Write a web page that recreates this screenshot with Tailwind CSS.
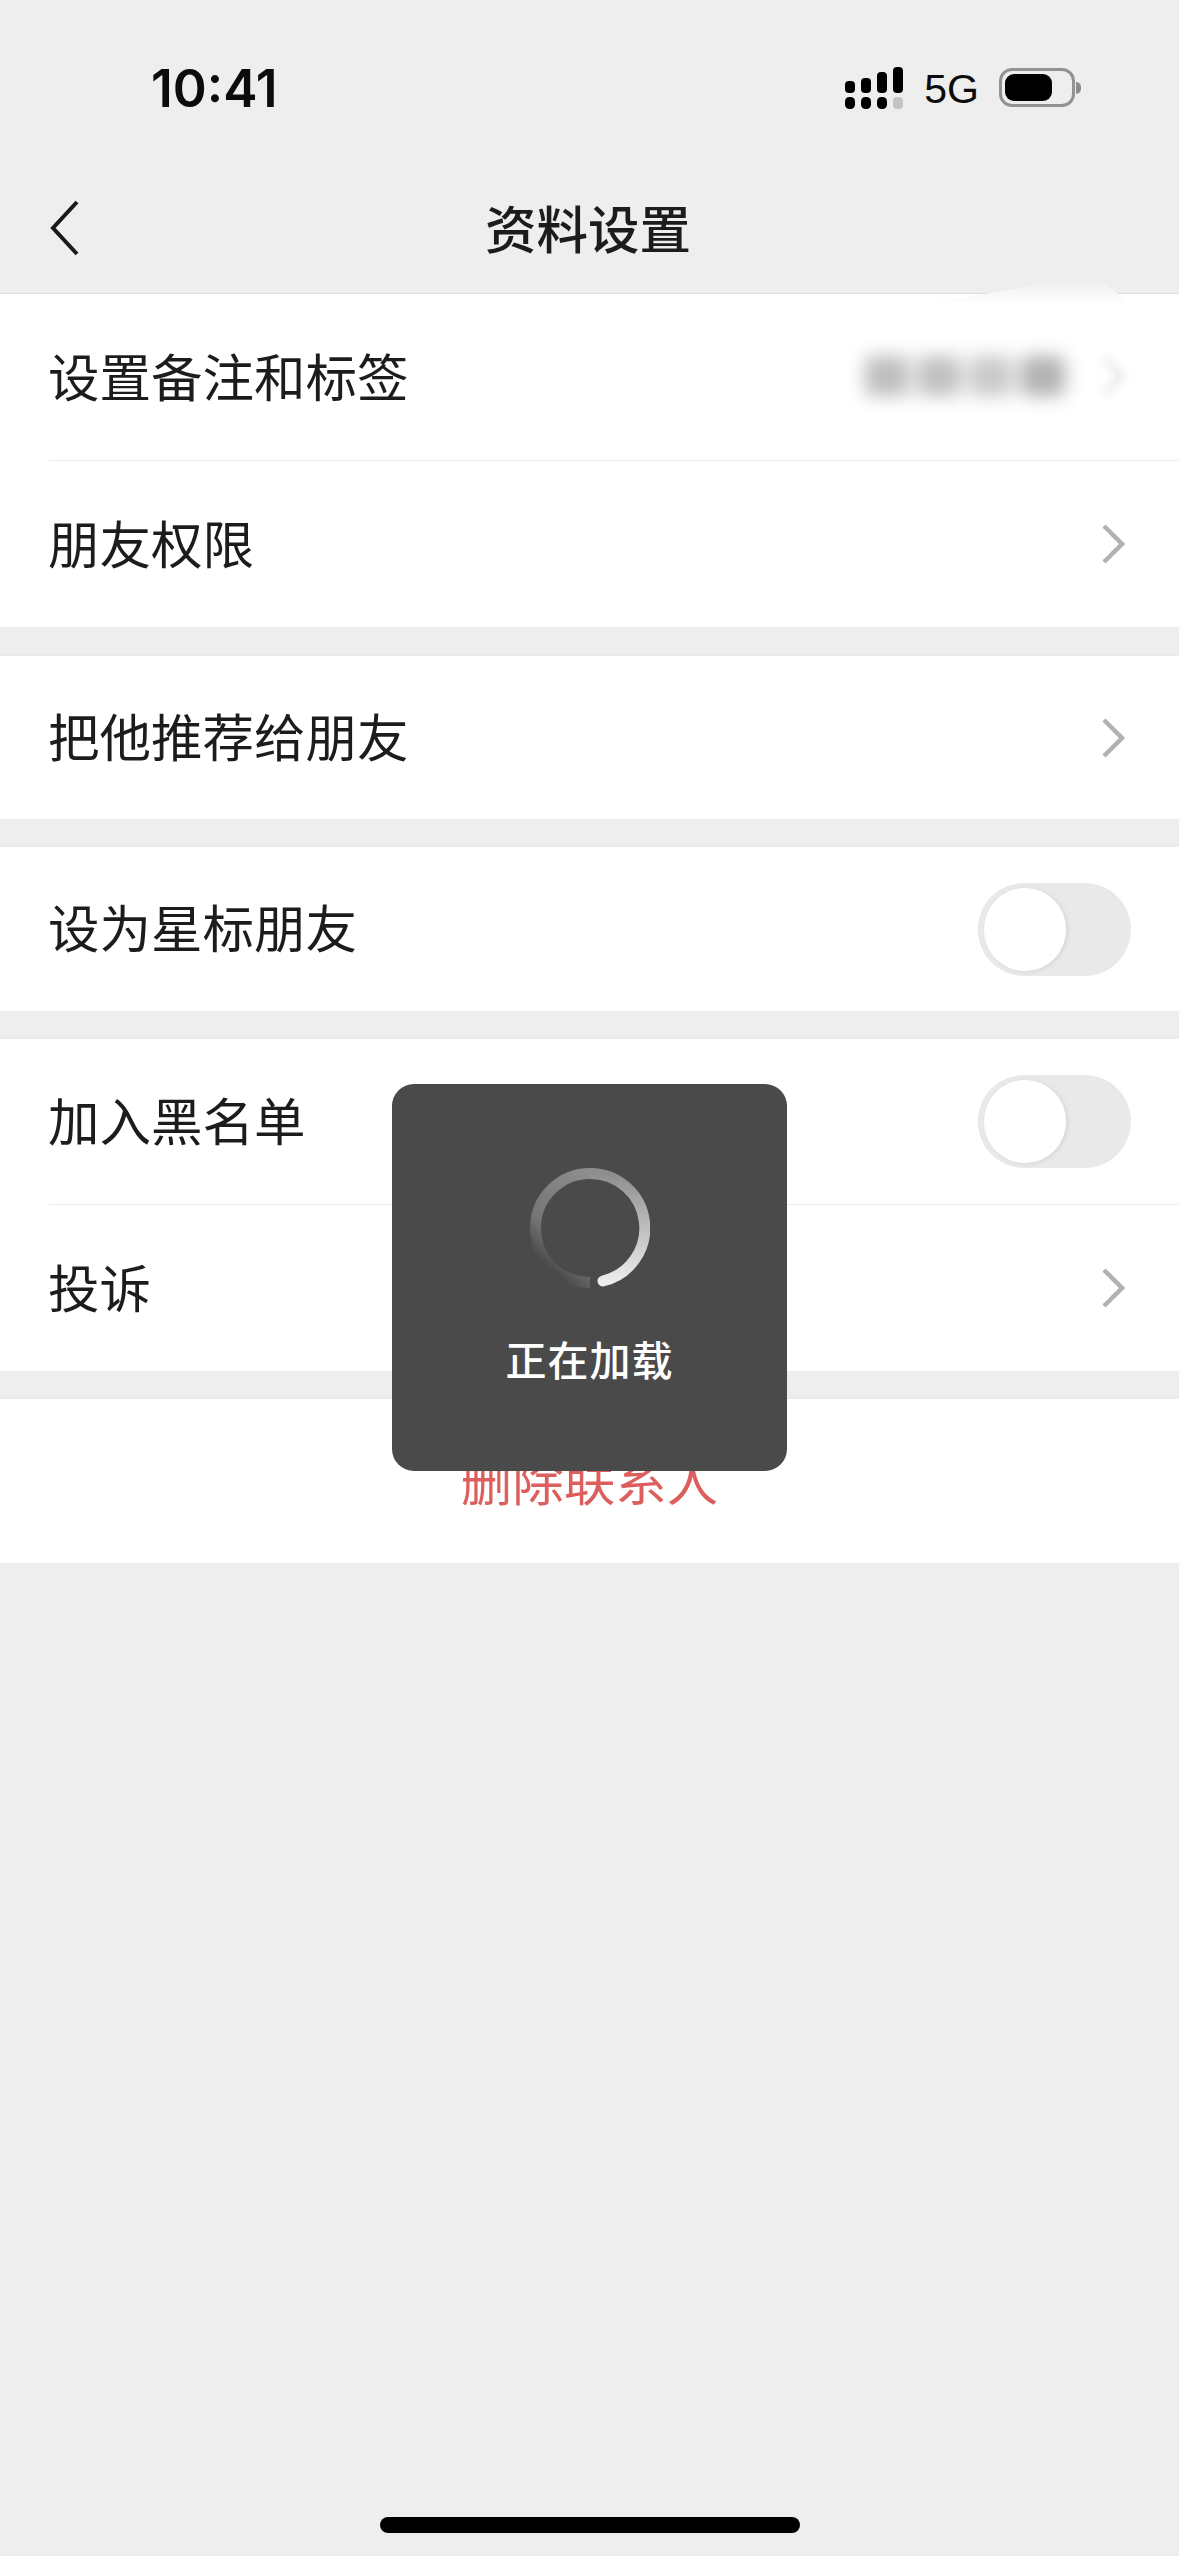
<!DOCTYPE html>
<html lang="zh-CN">
<head>
<meta charset="utf-8">
<script src="https://cdn.jsdelivr.net/npm/@tailwindcss/browser@4"></script>
</head>
<body class="m-0">
<div class="relative w-[1179px] h-[2556px] overflow-hidden flex flex-col bg-[#eeeeee] text-[#1c1c1c] font-['Noto_Sans_CJK_SC','Noto_Sans_CJK_SC',sans-serif]">
  <!-- status bar -->
  <div class="h-[176px] shrink-0 pt-[54px] pl-[151px] pr-[98px] flex items-start justify-between">
    <span class="text-[51.5px] leading-[68px] font-semibold font-['Inter',sans-serif] text-[#0c0c0c]">10:41</span>
    <div class="flex items-start">
      <svg class="mt-[13px]" width="60" height="44" viewBox="0 0 60 44" fill="#000">
        <rect x="1" y="14" width="10" height="12" rx="4"/><rect x="17" y="11" width="10" height="15" rx="4"/><rect x="33" y="5" width="10" height="21" rx="4"/><rect x="49" y="0" width="10" height="26" rx="4"/>
        <rect x="1" y="30" width="10" height="12" rx="4.5"/><rect x="17" y="30" width="10" height="12" rx="4.5"/><rect x="33" y="30" width="10" height="12" rx="4.5"/><rect x="49" y="30" width="10" height="12" rx="4" fill="#c4c4c4"/>
      </svg>
      <span class="ml-[20px] mt-[12px] text-[41px] leading-[46px] font-['Liberation_Sans',sans-serif] text-[#0c0c0c]">5G</span>
      <div class="ml-[20px] mt-[14px] flex items-center">
        <div class="w-[76px] h-[39px] rounded-[13px] border-[3px] border-[#929292] p-[3px]">
          <div class="w-[47px] h-full rounded-[9px] bg-black"></div>
        </div>
        <div class="ml-[1px] w-[5px] h-[12px] rounded-r-full bg-[#8c8c8c]"></div>
      </div>
    </div>
  </div>
  <!-- nav -->
  <div class="relative h-[118px] shrink-0 flex items-center justify-center border-b border-[#dcdcdc]">
    <svg class="absolute left-[46px] top-[24px]" width="36" height="56" viewBox="0 0 36 56" fill="none" stroke="#1a1a1a" stroke-width="4"><path d="M31 2 L7 28 L31 54"/></svg>
    <span class="text-[51.5px] leading-[70px] font-medium -mt-[16px] -ml-[3px]">资料设置</span>
    <svg class="absolute left-[920px] bottom-[-12px]" width="210" height="24" viewBox="0 0 210 24">
      <defs><linearGradient id="s" x1="0" y1="0" x2="0" y2="1"><stop offset="0" stop-color="#f1f1f1"/><stop offset="1" stop-color="#ffffff"/></linearGradient></defs>
      <path d="M0 24 L70 12 L120 3 L185 3 L205 18 L210 24 Z" fill="url(#s)"/>
    </svg>
  </div>
  <!-- group 1 -->
  <div class="bg-white shrink-0 border-b border-[#e9e9e9]">
    <div class="h-[167px] ml-[49px] flex items-center border-b border-[#ececec]">
      <span class="text-[51.5px] leading-[70px] font-normal -ml-[1px] -mt-[4px]">设置备注和标签</span>
      <div class="ml-auto mr-[54px] flex items-center gap-[36px]">
        <div class="flex gap-[8px] blur-[9px] opacity-45 -mt-[2px]">
          <div class="w-[44px] h-[40px] rounded-md bg-[#6f6f6f]"></div><div class="w-[44px] h-[40px] rounded-md bg-[#777777]"></div><div class="w-[44px] h-[40px] rounded-md bg-[#8a8a8a]"></div><div class="w-[44px] h-[40px] rounded-md bg-[#555555]"></div>
        </div>
        <svg class="blur-[5px] opacity-40 -mt-[2px]" width="24" height="42" viewBox="0 0 24 42" fill="none" stroke="#a8a8a8" stroke-width="4"><path d="M3 3 L21 21 L3 39"/></svg>
      </div>
    </div>
    <div class="h-[166px] pl-[49px] flex items-center">
      <span class="text-[51.5px] leading-[70px] font-normal -mt-[4px] -ml-[1px]">朋友权限</span>
      <svg class="ml-auto mr-[54px]" width="24" height="42" viewBox="0 0 24 42" fill="none" stroke="#b2b2b2" stroke-width="4.5"><path d="M3 3 L21 21 L3 39"/></svg>
    </div>
  </div>
  <!-- group 2 -->
  <div class="mt-[27px] h-[165px] shrink-0 bg-white border-y border-[#e9e9e9] pl-[49px] flex items-center">
    <span class="text-[51.5px] leading-[70px] font-normal -mt-[6px] -ml-[1px]">把他推荐给朋友</span>
    <svg class="ml-auto mr-[54px]" width="24" height="42" viewBox="0 0 24 42" fill="none" stroke="#b2b2b2" stroke-width="4.5"><path d="M3 3 L21 21 L3 39"/></svg>
  </div>
  <!-- group 3 -->
  <div class="mt-[26px] h-[166px] shrink-0 bg-white border-y border-[#e9e9e9] pl-[49px] flex items-center">
    <span class="text-[51.5px] leading-[70px] font-normal -mt-[6px] -ml-[1px]">设为星标朋友</span>
    <div class="ml-auto mr-[48px] w-[153px] h-[93px] rounded-full bg-[#e9e9e9] p-[5px] border-l-[1px] border-[#e4e4e4]">
      <div class="w-[82px] h-[83px] rounded-full bg-white shadow-[2px_1px_5px_rgba(0,0,0,0.08)]"></div>
    </div>
  </div>
  <!-- group 4 -->
  <div class="mt-[26px] shrink-0 bg-white border-y border-[#e9e9e9]">
    <div class="h-[166px] ml-[49px] flex items-center border-b border-[#ececec]">
      <span class="text-[51.5px] leading-[70px] font-normal -mt-[6px] -ml-[1px]">加入黑名单</span>
      <div class="ml-auto mr-[48px] w-[153px] h-[93px] rounded-full bg-[#e9e9e9] p-[5px] border-l-[1px] border-[#e4e4e4]">
        <div class="w-[82px] h-[83px] rounded-full bg-white shadow-[2px_1px_5px_rgba(0,0,0,0.08)]"></div>
      </div>
    </div>
    <div class="h-[166px] pl-[49px] flex items-center">
      <span class="text-[51.5px] leading-[70px] font-normal -mt-[4px] -ml-[1px]">投诉</span>
      <svg class="ml-auto mr-[54px]" width="24" height="42" viewBox="0 0 24 42" fill="none" stroke="#b2b2b2" stroke-width="4.5"><path d="M3 3 L21 21 L3 39"/></svg>
    </div>
  </div>
  <!-- delete -->
  <div class="mt-[26px] h-[166px] shrink-0 bg-white border-y border-[#e9e9e9] flex items-center justify-center">
    <span class="text-[51.5px] leading-[70px] font-normal text-[#dc5f5e] -mt-[4px]">删除联系人</span>
  </div>
  <!-- home indicator -->
  <div class="mt-auto mb-[23px] mx-auto w-[420px] h-[16px] rounded-full bg-black"></div>
  <!-- toast -->
  <div class="absolute left-[392px] top-[1084px] w-[395px] h-[387px] rounded-[22px] bg-[#4a4a4a] flex flex-col items-center">
    <svg class="mt-[84px]" width="120" height="120" viewBox="0 0 120 120" fill="none" stroke-width="11" stroke-linecap="round">
      <defs>
        <linearGradient id="a" x1="0" y1="0" x2="0" y2="1"><stop offset="0" stop-color="#8e8e8e"/><stop offset="1" stop-color="#ececec"/></linearGradient>
        <linearGradient id="b" x1="1" y1="0" x2="0.55" y2="1"><stop offset="0" stop-color="#8e8e8e"/><stop offset="0.7" stop-color="#767676"/><stop offset="1" stop-color="#4a4a4a"/></linearGradient>
      </defs>
      <path d="M60 5.5 A54.5 54.5 0 0 1 73 113" stroke="url(#a)"/>
      <path d="M60 5.5 A54.5 54.5 0 0 0 60 114.5" stroke="url(#b)" stroke-linecap="butt"/>
    </svg>
    <span class="mt-[41px] text-[41px] leading-[58px] tracking-[1px] text-white font-medium">正在加载</span>
  </div>
</div>
</body>
</html>
